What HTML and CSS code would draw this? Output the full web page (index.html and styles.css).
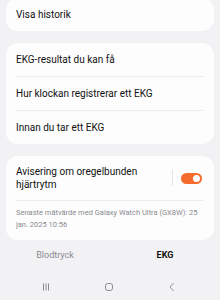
FILE: index.html
```html
<!DOCTYPE html>
<html>
<head>
<meta charset="utf-8">
<link rel="stylesheet" href="styles.css">
</head>
<body>
<div class="screen">
  <div class="content">
    <div class="card first">
      <div class="row">Visa historik</div>
    </div>
    <div class="card">
      <div class="row">EKG-resultat du kan få</div>
      <div class="divider"></div>
      <div class="row">Hur klockan registrerar ett EKG</div>
      <div class="divider"></div>
      <div class="row">Innan du tar ett EKG</div>
    </div>
    <div class="card">
      <div class="toggle-row">
        <div class="toggle-label">Avisering om oregelbunden hjärtrytm</div>
        <div class="vsep"></div>
        <div class="switch"><div class="knob"></div></div>
      </div>
      <div class="divider"></div>
      <div class="note">Senaste mätvärde med Galaxy Watch Ultra (GX8W): 25 jan. 2025 10:56</div>
    </div>
  </div>
  <div class="tabs">
    <div class="tab">Blodtryck</div>
    <div class="tab active">EKG</div>
  </div>
  <div class="navbar">
    <svg class="nav-icon" width="10" height="10" viewBox="0 0 10 10"><path d="M2.5 1.5v7M5 1.5v7M7.5 1.5v7" stroke="#8a8a8e" stroke-width="1" fill="none"/></svg>
    <svg class="nav-icon" width="10" height="10" viewBox="0 0 10 10"><rect x="1.5" y="1.5" width="7" height="7" rx="2.2" stroke="#8a8a8e" stroke-width="1" fill="none"/></svg>
    <svg class="nav-icon" width="10" height="10" viewBox="0 0 10 10"><path d="M6.5 1L3 5l3.5 4" stroke="#8a8a8e" stroke-width="0.9" fill="none"/></svg>
  </div>
</div>
</body>
</html>
```
FILE: styles.css
```css
html, body {
  margin: 0;
  padding: 0;
  background: #f2f2f4;
}
.screen {
  width: 220px;
  height: 300px;
  overflow: hidden;
  display: flex;
  flex-direction: column;
  font-family: Roboto, "Noto Sans", sans-serif;
  color: #111;
}
.content {
  display: flex;
  flex-direction: column;
  gap: 12px;
  padding: 0 6px;
}
.card {
  background: #fdfdfe;
  border-radius: 12px;
}
.card.first {
  margin-top: -2px;
}
.row {
  height: 33px;
  display: flex;
  align-items: center;
  padding: 0 10px;
  font-size: 10px;
}
.divider {
  height: 1px;
  background: #ececee;
  margin: 0 10px;
}
.toggle-row {
  display: flex;
  align-items: center;
  padding: 9px 12px 9px 10px;
}
.toggle-label {
  flex: 1;
  font-size: 10px;
  line-height: 13px;
  padding-right: 20px;
}
.vsep {
  width: 1px;
  height: 16px;
  background: #e4e4e6;
  margin-right: 8px;
}
.switch {
  width: 21px;
  height: 11px;
  border-radius: 6px;
  background: #f56b2e;
  position: relative;
}
.knob {
  position: absolute;
  right: 2px;
  top: 2px;
  width: 7px;
  height: 7px;
  border-radius: 50%;
  background: #fff;
}
.note {
  padding: 6px 10px 9px;
  font-size: 7.5px;
  line-height: 12px;
  color: #8a8a8e;
}
.tabs {
  display: flex;
  margin-top: 7px;
  height: 16px;
}
.tab {
  flex: 1;
  display: flex;
  align-items: center;
  justify-content: center;
  font-size: 9px;
  color: #8a8a8e;
}
.tab.active {
  color: #111;
  font-weight: 700;
}
.navbar {
  display: flex;
  justify-content: space-between;
  align-items: center;
  margin-top: 19px;
  padding: 0 43px 0 41px;
}
.nav-icon {
  display: block;
}
```
